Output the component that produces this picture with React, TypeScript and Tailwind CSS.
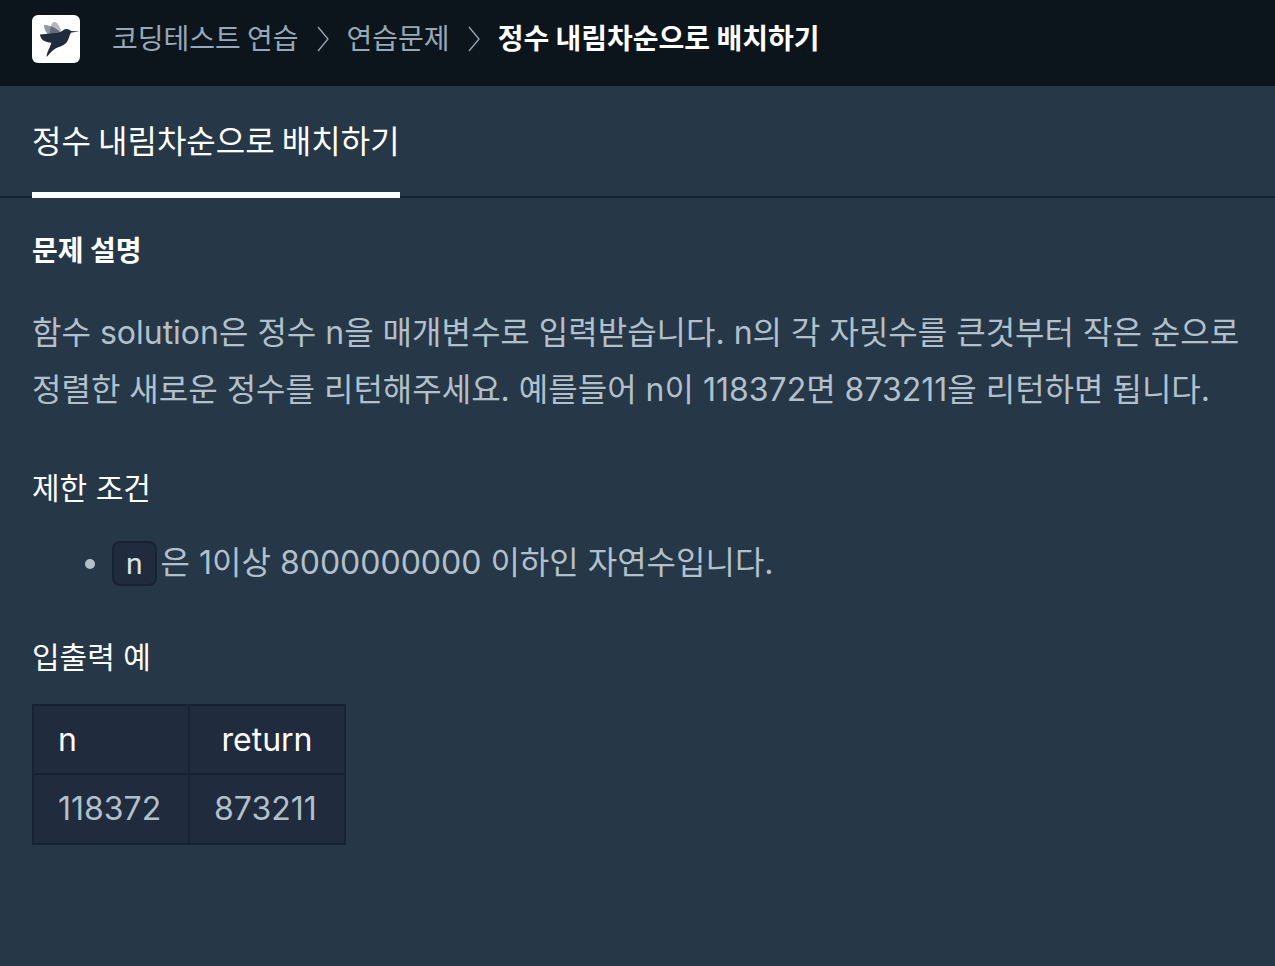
import React from "react";

function Logo() {
  return (
    <svg viewBox="0 0 48 48" className="size-12 shrink-0" role="img" aria-label="홈">
      <rect width="48" height="48" rx="6" fill="#fff" />
      <path d="M18 17 L19.500 9.500 C20.200 6.500 23.500 6 25.500 8.500 C27.500 11.500 28.700 14 29.500 17.500 L24 19 Z" fill="#b5b8bf" />
      <path d="M12 10 C15 9.700 18.500 10.800 21 12.300 C24 14 26.500 15.500 28 17.500 L24 19.500 L15.500 19 C13 16 12 13 12 10 Z" fill="#9297a2" />
      <path d="M18.900 11.300 C22.500 12.500 26.500 15.300 28.500 17.500 L23 19.300 L17.600 18.500 Z" fill="#646b7a" />
      <path
        d="M8 19.500 C14 18.500 24 19 29 16.800 C31 15.600 31.800 14 34.500 14 C37 14 37.800 15.500 39.500 16 L47.500 16.400 L39.500 17.500 C37.500 18.800 37.800 22 35.500 26 C32.500 31 28 31.200 23.500 33.500 C19.500 35.800 17.500 39 14.700 42 C14.300 37.500 18 33.500 19.300 27.800 C13 27.200 8.500 25 8 19.500 Z"
        fill="#212b3e"
      />
    </svg>
  );
}

function Separator() {
  return (
    <svg viewBox="0 0 12 26" className="mt-[3px] h-[26px] w-3 shrink-0" fill="none" stroke="#98a8b9" strokeWidth="1.3" aria-hidden="true">
      <path d="M1 1 L11 13 L1 25" />
    </svg>
  );
}

export default function App() {
  return (
    <div className="min-h-screen bg-[#263747] font-['Inter','Noto_Sans_CJK_KR',sans-serif] text-[32px] text-[#b2c0cc]">
      <header className="flex items-start bg-[#0c151c] px-8 pt-[15px] pb-[23px]">
        <a href="#home" className="mr-8">
          <Logo />
        </a>
        <nav
          aria-label="경로"
          className="flex items-center gap-[18px] font-['Noto_Sans_CJK_KR',sans-serif] text-[28px] leading-[44px] text-[#98a8b9]"
        >
          <a href="#practice">코딩테스트 연습</a>
          <Separator />
          <a href="#problems">연습문제</a>
          <Separator />
          <span className="font-bold text-white">정수 내림차순으로 배치하기</span>
        </nav>
      </header>

      <div className="flex border-b-2 border-[#172334] px-8">
        <a
          href="#problem"
          className="-mb-[2px] border-b-[6px] border-white py-[29px] font-['Noto_Sans_CJK_KR',sans-serif] leading-[48px] text-white"
        >
          정수 내림차순으로 배치하기
        </a>
      </div>

      <main className="px-8 pt-[31px] pb-8">
        <h1 className="font-['Noto_Sans_CJK_KR',sans-serif] text-[28px] leading-10 font-bold text-white">문제 설명</h1>
        <p className="mt-[35px] leading-[57px]">
          함수 solution은 정수 n을 매개변수로 입력받습니다. n의 각 자릿수를 큰것부터 작은 순으로 정렬한 새로운
          정수를 리턴해주세요. 예를들어 n이 118372면 873211을 리턴하면 됩니다.
        </p>

        <h2 className="mt-12 text-[30px] leading-[44px] font-normal text-white">제한 조건</h2>
        <ul className="mt-6 list-disc pl-20">
          <li className="leading-[57px]">
            <code className="mr-1 inline-block rounded-lg border-2 border-[#172334] bg-[#202b3d] px-3 font-[Roboto,sans-serif] text-[30px] leading-[41px] text-[#d7e2eb]">
              n
            </code>
            은 1이상 8000000000 이하인 자연수입니다.
          </li>
        </ul>

        <h2 className="mt-11 text-[30px] leading-[44px] font-normal text-white">입출력 예</h2>
        <table className="mt-[25px] border-collapse bg-[#202b3d] leading-[48px]">
          <thead className="text-white">
            <tr>
              <th className="min-w-[156px] border-2 border-[#172334] px-6 pt-[10px] pb-[9px] text-left font-normal">n</th>
              <th className="min-w-[156px] border-2 border-[#172334] px-6 pt-[10px] pb-[9px] text-center font-normal">return</th>
            </tr>
          </thead>
          <tbody>
            <tr>
              <td className="border-2 border-[#172334] px-6 py-[10px]">118372</td>
              <td className="border-2 border-[#172334] px-6 py-[10px]">873211</td>
            </tr>
          </tbody>
        </table>
      </main>
    </div>
  );
}
